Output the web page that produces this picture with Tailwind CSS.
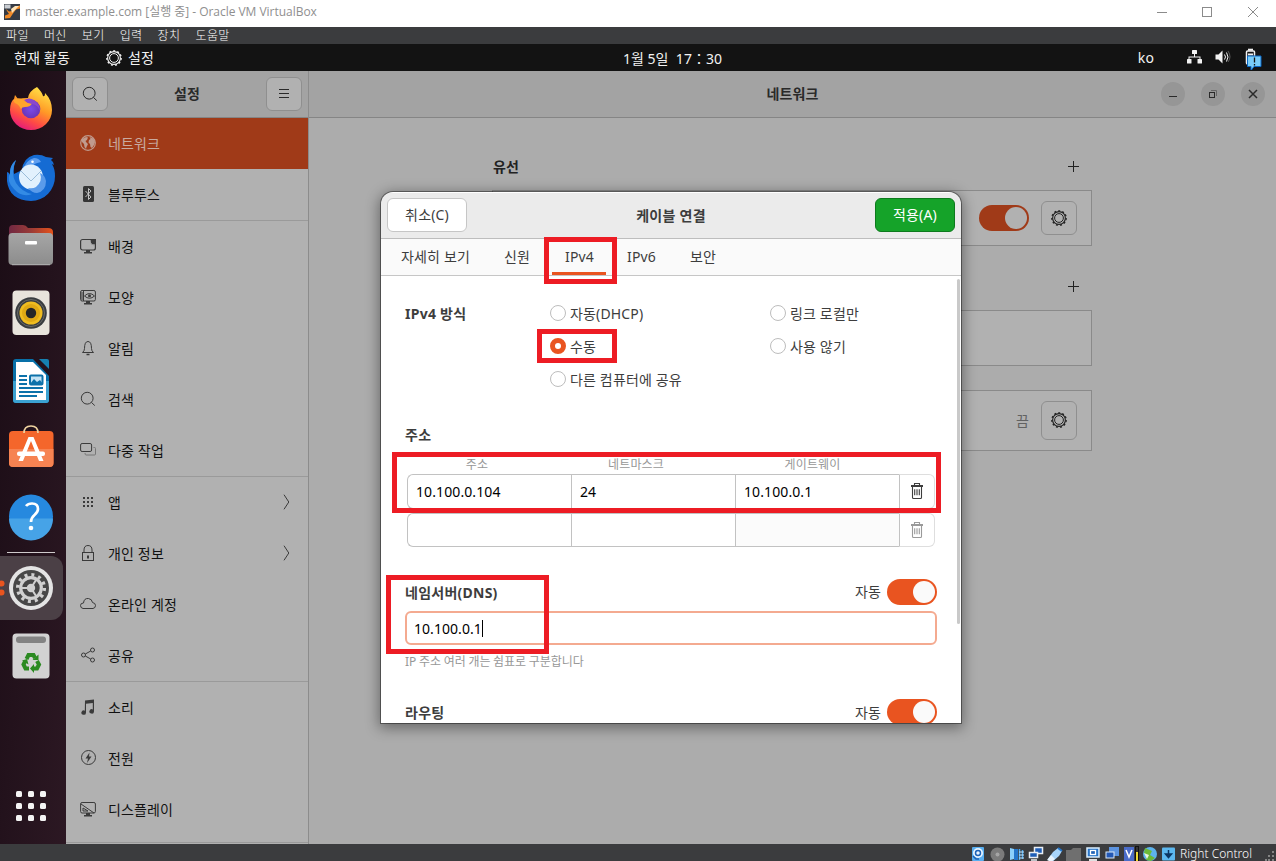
<!DOCTYPE html>
<html lang="ko">
<head>
<meta charset="utf-8">
<title>master.example.com</title>
<script src="https://cdn.jsdelivr.net/npm/@tailwindcss/browser@4"></script>
</head>
<body class="w-[1276px] h-[861px] overflow-hidden relative flex flex-col bg-white font-['Noto_Sans','Noto_Sans_CJK_KR',sans-serif] text-[14px] leading-5 tracking-[0.15px] text-[#3d3d3d]">

<svg width="0" height="0" class="absolute">
  <defs>
    <symbol id="gear" viewBox="0 0 16 16"><g fill="none" stroke="currentColor"><circle cx="8" cy="8" r="6.400" stroke-width="1.100"/><circle cx="8" cy="8" r="4.400"/><circle cx="8" cy="8" r="7.200" stroke-width="1.300" stroke-dasharray="2 2.112"/></g></symbol>
    <symbol id="search" viewBox="0 0 16 16"><g fill="none" stroke="currentColor"><circle cx="7.200" cy="7.200" r="5.900"/><path d="M11.400 11.400l3.400 3.200"/></g></symbol>
    <symbol id="trash" viewBox="0 0 16 18"><g fill="none" stroke="currentColor" stroke-width="1.100"><path d="M5.500 3V1.500h5V3M3.500 5v10.500q0 1 1 1h7q1 0 1-1V5"/><path d="M2 4h12" stroke-width="2"/><path d="M5.700 7.200v6M8 7.200v6M10.300 7.200v6"/></g></symbol>
    <symbol id="chev" viewBox="0 0 8 16"><path d="M1 .7l4.800 7.300L1 15.300" fill="none" stroke="currentColor"/></symbol>
  </defs>
</svg>

<!-- host window title bar -->
<header class="h-[27px] shrink-0 bg-white flex items-center pl-1 text-[#8f8f8f]">
  <svg width="16" height="16" class="-mt-1" viewBox="0 0 16 16"><rect width="16" height="16" fill="#353b45"/><rect x=".5" y=".5" width="6" height="4" fill="#c9cdd2"/><path d="M2 5l3 2.500 4-.5 5-5 2-.5v3l-4 1-3 4-3 4.500-5 .5v-3l4-1.500L3 7z" fill="#f08a28"/><path d="M7 5l4-3h4l-4 4-3 3z" fill="#fde3b8"/></svg>
  <span class="ml-[5px] -mt-[3px] text-[12px] tracking-[-0.03px] whitespace-nowrap font-['Open_Sans','Noto_Sans_CJK_KR',sans-serif]">master.example.com [실행 중] - Oracle VM VirtualBox</span>
  <svg class="ml-auto mr-[16px] -mt-[4px]" width="103" height="12" viewBox="0 0 103 12" fill="none" stroke="#8b8b8b"><path d="M0 6.500h10"/><rect x="45.500" y="1.500" width="9" height="9"/><path d="M91 1l10 10M101 1l-10 10"/></svg>
</header>

<nav class="h-[17px] shrink-0 bg-[#3b3c3e] flex items-center pl-[6px] gap-[15px] text-[12px] leading-none tracking-[0.4px] text-white font-['Noto_Sans_CJK_KR',sans-serif] font-light whitespace-nowrap [&>span]:-mt-[2px]">
  <span>파일</span><span>머신</span><span>보기</span><span>입력</span><span>장치</span><span>도움말</span>
</nav>

<!-- guest top panel -->
<div class="h-[27px] shrink-0 bg-[#131313] text-[#f2f2f2] grid grid-cols-3 items-center">
  <div class="flex items-center pl-[14px]"><span>현재 활동</span><svg class="ml-[36px] w-[16px] h-[16px]"><use href="#gear"/></svg><span class="ml-[6px]">설정</span></div>
  <div class="text-center pt-[3px] pr-[6px] whitespace-pre pl-[78px] -ml-[36px] -mr-[33px] tracking-[0.03px]">1월 5일  17：30</div>
  <div class="flex items-center justify-end pr-[11px]">
    <span>ko</span>
    <svg class="ml-[31px]" width="80" height="24" viewBox="0 0 80 24">
      <g fill="#f2f2f2"><rect x="7" y="4" width="5" height="4" rx=".6"/><rect x="2" y="13" width="4.500" height="4.500" rx=".6"/><rect x="12.500" y="13" width="4.500" height="4.500" rx=".6"/><path d="M9 8h1v2.500h5.500V13h-1v-1.500h-10V13h-1v-2.500H9zM30.500 8.500h3l4-4v13l-4-4h-3z"/></g>
      <g fill="none" stroke="#f2f2f2"><path d="M39.500 8.500q2 2.500 0 5M41.500 6.500q3 4.500 0 9" /><path d="M43 5q4 6 0 11" stroke="#777" stroke-width=".7"/><rect x="61.500" y="5" width="8" height="13" rx="1" stroke-width="1.500"/><path d="M63 3.700h5" stroke-width="2"/></g>
      <path d="M63 7.500h5v2h-5z" fill="#eee"/><path d="M62.500 10h13.500v10.500h-7l-3 4v-4h-3.500z" fill="#79cdf9" stroke="#0a67c4"/><path d="M69.500 11.500v5M69.500 18v1.500" stroke="#111" stroke-width="1.300"/>
    </svg>
  </div>
</div>

<main class="h-[773px] shrink-0 flex">
  <!-- dock -->
  <aside class="w-[66px] shrink-0 bg-gradient-to-br from-[#1a0c15] to-[#2c1823] pt-[4px] flex flex-col">
    <svg width="66" height="68" viewBox="0 0 66 68"><defs><linearGradient id="ff" x1=".8" y1="0" x2=".3" y2="1"><stop offset="0" stop-color="#ffe94a"/><stop offset=".45" stop-color="#ff9a26"/><stop offset=".75" stop-color="#ff4a45"/><stop offset="1" stop-color="#e3197e"/></linearGradient><radialGradient id="fp"><stop offset="0" stop-color="#7a4be8"/><stop offset="1" stop-color="#6b35b8"/></radialGradient></defs>
      <path d="M37 12q5 5 6 9 2 1 2-3 7 7 7 17a21 20 0 0 1-42 0Q10 27 14 24l1-4 3 4q4-1 10-1 1-7 9-11z" fill="url(#ff)"/><circle cx="31" cy="34" r="9.300" fill="url(#fp)"/><path d="M13 25q7-4 11 1 3 2 8 2-1 4-7 4-3 0-4 2-2-4-4-5-3-1-4-4z" fill="#ffa52b"/><path d="M24 25q5-3 10 0 6 4 6 11-2-6-8-7l-4-1z" fill="#8a48cc"/></svg>
    <svg width="66" height="68" viewBox="0 0 66 68"><path d="M16 17q-3 7-2 14l8-4q1-12 12-15 7-1 12 2l7 1-2 2q3 2 3 5l-2-1q3 5 3 12a24 24.500 0 0 1-24 25Q9 57 7 38L7 29q2 0 3 3-1-9 6-15z" fill="#156bd3"/><path d="M16 17q-6 13 0 23 6 9 16 11-10 4-18-5-8-8-4-16 0-8 6-13z" fill="#338be5"/><path d="M23 27q3-10 11-12 5 0 7 4-6 1-9 4z" fill="#5f9ff0"/><ellipse cx="31" cy="34" rx="12" ry="12.500" fill="#e2f1fd"/><path d="M21 28l10 10 10-10" fill="none" stroke="#9bbdd9"/><path d="M40 30q3 8-4 14-3 2-8 1 4 5 9 5 9-2 9-12-1-6-6-8z" fill="#5a9bea"/><circle cx="32.500" cy="18.700" r="1.300" fill="#fff"/></svg>
    <svg width="66" height="68" viewBox="0 0 66 68"><defs><linearGradient id="fo"><stop offset="0" stop-color="#702842"/><stop offset=".5" stop-color="#9a3b37"/><stop offset="1" stop-color="#e6521b"/></linearGradient><linearGradient id="gr" x2="0" y2="1"><stop offset="0" stop-color="#a6a6a6"/><stop offset="1" stop-color="#8c8c8c"/></linearGradient></defs><path d="M9 18q0-4 4-4h10q3 0 5 3h20q5 0 5 4v15H9z" fill="url(#fo)"/><rect x="8.500" y="22" width="44.500" height="32" rx="4" fill="url(#gr)"/><path d="M12 53.800h38" stroke="#c8c8c8" stroke-width=".7"/><rect x="25" y="30" width="12" height="3.500" rx="1" fill="#fff"/></svg>
    <svg width="66" height="68" viewBox="0 0 66 68"><rect x="12.500" y="11.500" width="37" height="44.500" rx="4" fill="#e8e4dc"/><circle cx="31" cy="34" r="15.800" fill="#393d40"/><circle cx="31" cy="34" r="13.500" fill="none" stroke="#696a68"/><circle cx="31" cy="34" r="11.500" fill="#f0bd20"/><circle cx="31" cy="34" r="9" fill="#e0a914"/><circle cx="31" cy="34" r="5.200" fill="#252627"/></svg>
    <svg width="66" height="68" viewBox="0 0 66 68"><path d="M13 15q0-3 3-3h17l16 17v24q0 3-3 3H16q-3 0-3-3z" fill="#0870a8"/><path d="M13 34h36v19q0 3-3 3H16q-3 0-3-3z" fill="#3ba2d2"/><path d="M16 15h17l13 13v25H16z" fill="#fff"/><path d="M39 12h8q2 0 2 2v8z" fill="#1680b0"/><g stroke="#0d72aa" stroke-width="2"><path d="M19 29h8M19 33h8M19 37h8M19 41h24M19 45h24M19 49h18"/><rect x="30" y="28.500" width="12.500" height="9" rx="1" fill="#c4e3f4"/></g><path d="M30 37l4-5 3 3 3-2 3 4z" fill="#0d72aa"/></svg>
    <svg width="66" height="68" viewBox="0 0 66 68"><rect x="9" y="16" width="44.500" height="36" rx="4" fill="#f4662b"/><path d="M9 34h44.500v14q0 4-4 4H13q-4 0-4-4z" fill="#f68352"/><path d="M24 18q0-7 7-7t7 7" fill="none" stroke="#efd3a0" stroke-width="1.700"/><path d="M28.500 22h5l10 24H39l-8-20-8 20h-4.500z" fill="#fff"/><rect x="17" y="36.500" width="28" height="4.500" rx="2" fill="#fff"/></svg>
    <svg width="66" height="68" viewBox="0 0 66 68"><circle cx="31" cy="33.500" r="22" fill="#2689df"/><path d="M9 35.500h44a22 22 0 0 1-44 0z" fill="#46a3e7"/><path d="M26 23q2-2.500 6-2.500 6 0 6 5.500 0 3-3.500 6T31 39" fill="none" stroke="#fff" stroke-width="2.700"/><circle cx="31" cy="45" r="2.300" fill="#fff"/></svg>
    <div class="h-[2px] ml-[7px] w-[48px] border-b border-[#cfcacc]"></div>
    <svg class="mt-[1px]" width="66" height="68" viewBox="0 0 66 68"><rect x="-12" y="2" width="75" height="64" rx="12" fill="#4b4046"/><circle cx="1.500" cy="29.500" r="3" fill="#e9541f"/><circle cx="1.500" cy="38.500" r="3" fill="#e9541f"/><circle cx="31" cy="34" r="22" fill="#e4e4e4"/><circle cx="31" cy="34" r="18" fill="#474747"/><g fill="none" stroke="#d0d0d0"><circle cx="31" cy="34" r="10.300" stroke-width="3.200"/><circle cx="31" cy="34" r="13.300" stroke-width="3.500" stroke-dasharray="3 3.960"/><path d="M22 34h9M31 34l5-8M31 34l5 8" stroke-width="2"/></g><circle cx="31" cy="34" r="4.200" fill="#d0d0d0"/></svg>
    <svg width="66" height="68" viewBox="0 0 66 68"><rect x="12.500" y="11.500" width="37" height="45" rx="4" fill="#d2d2d2"/><rect x="16" y="14.500" width="30" height="6.500" rx="3" fill="#838383"/><g fill="none" stroke="#2b8a21" stroke-width="4"><path d="M26.500 37l2-4h5l1.500 3M37 39l2 3.500-2 4h-4M29 46.500h-3.500l-2-4 1.500-3"/></g><g fill="#2b8a21"><path d="M38.500 32.500v5.500h-6zM34 42v9l-4-4.500zM22 38.500l5-1.500 1.500 5.500z"/></g></svg>
    <svg class="mt-[77px]" width="66" height="68" viewBox="0 0 66 68"><g fill="#f4f4f4"><rect x="16" y="24" width="6" height="6" rx="1.500"/><rect x="28" y="24" width="6" height="6" rx="1.500"/><rect x="40" y="24" width="6" height="6" rx="1.500"/><rect x="16" y="36" width="6" height="6" rx="1.500"/><rect x="28" y="36" width="6" height="6" rx="1.500"/><rect x="40" y="36" width="6" height="6" rx="1.500"/><rect x="16" y="48" width="6" height="6" rx="1.500"/><rect x="28" y="48" width="6" height="6" rx="1.500"/><rect x="40" y="48" width="6" height="6" rx="1.500"/></g></svg>
  </aside>

  <!-- settings sidebar -->
  <section class="w-[243px] shrink-0 bg-[#b1b1b1] border-r border-[#8c8c8c] text-[#111] overflow-hidden">
    <div class="h-[47px] bg-[#a3a3a3] border-b border-[#858585] flex items-center justify-between px-[6px] text-[#2a2a2a]">
      <div class="w-9 h-[34px] rounded-md border border-[#8f8f8f] bg-[#b1b1b1] flex items-center justify-center"><svg class="w-4 h-4"><use href="#search"/></svg></div>
      <b>설정</b>
      <div class="w-9 h-[34px] rounded-md border border-[#8f8f8f] bg-[#b1b1b1] flex items-center justify-center"><svg width="16" height="16" viewBox="0 0 16 16" stroke="currentColor"><path d="M3 3.500h10M3 7.500h10M3 11.500h10"/></svg></div>
    </div>
    <ul class="[&>li]:h-[51px] [&>li]:flex [&>li]:items-center [&>li]:pl-[14px] [&>li]:gap-3 [&_svg]:shrink-0 [&_svg]:-mt-[2px] [&_svg]:text-[#3a3a3a]">
      <li class="bg-[#a03a18] text-[#c9aaa0]"><svg width="16" height="16" viewBox="0 0 16 16"><circle cx="8" cy="8" r="7.300" fill="none" stroke="#c09b8e" stroke-width="1.200"/><path d="M2 4l4-2 2 .5L7 5 5.500 6l1 1.500L8 9 6.500 12 6 14 4.500 12 4 9 2 7zM9.500 2l4 1.500L15 7l-1 3-2 3-1.500-1-.5-3-1.500-1.500L9 5l1.500-1z" fill="#c09b8e"/></svg><span>네트워크</span></li>
      <li><svg width="16" height="16" viewBox="0 0 16 16"><rect x="3" width="11" height="16" rx="1.500" fill="#353535"/><path d="M5.500 5l5.500 6-2.500 2.500v-11L11 5l-5.500 6" fill="none" stroke="#c0c0c0"/></svg><span>블루투스</span></li>
      <li class="border-t border-[#9a9a9a] !h-[52px]"><svg width="16" height="16" viewBox="0 0 16 16"><rect x=".6" y="1.500" width="14.800" height="10.500" rx="2" fill="none" stroke="currentColor" stroke-width="1.200"/><path d="M10 1h6v6q-2 1-5-1zM6 12h4v2h2v1.500H4V14h2z" fill="currentColor"/><path d="M10 2q-.5 5 5 5" stroke="#b1b1b1" fill="none"/></svg><span>배경</span></li>
      <li><svg width="16" height="16" viewBox="0 0 16 16"><g fill="none" stroke="currentColor"><rect x=".6" y="1.500" width="14.800" height="10.500" rx="1.500"/><path d="M3.500 2v10M1 4h2M1 6h2M1 8h2M1 10h2M4.500 7q5-5 10 0-5 4.500-10 0z"/></g><circle cx="9.500" cy="6.700" r="1.500" fill="currentColor"/><path d="M6 12h4v2h2v1.500H4V14h2z" fill="currentColor"/></svg><span>모양</span></li>
      <li><svg width="16" height="16" viewBox="0 0 16 16" fill="none" stroke="currentColor"><path d="M2.500 12.500q2-1.500 2-4 0-7 3.500-7t3.500 7q0 2.500 2 4z"/><path d="M6.500 14.500h3" stroke-width="1.500"/></svg><span>알림</span></li>
      <li><svg class="w-4 h-4"><use href="#search"/></svg><span>검색</span></li>
      <li><svg width="16" height="16" viewBox="0 0 16 16" fill="none" stroke="currentColor"><rect x=".6" y="1.500" width="11" height="8" rx="1.500"/><path d="M13.500 5.500h1q1 0 1 1v5.500q0 1-1 1H6q-1 0-1-2" stroke="#777"/></svg><span>다중 작업</span></li>
      <li class="border-t border-[#9a9a9a] !h-[52px]"><svg width="16" height="16" viewBox="0 0 16 16" fill="currentColor"><path d="M3 3h2v2H3zM7 3h2v2H7zM11 3h2v2h-2zM3 7h2v2H3zM7 7h2v2H7zM11 7h2v2h-2zM3 11h2v2H3zM7 11h2v2H7zM11 11h2v2h-2z"/></svg><span>앱</span><svg class="ml-auto mr-[17px] w-2 h-4"><use href="#chev"/></svg></li>
      <li><svg width="16" height="16" viewBox="0 0 16 16" fill="none" stroke="currentColor"><rect x="2.500" y="7.500" width="11" height="8"/><path d="M4 7.500V5q0-4.500 4-4.500T12 5v2.500"/><path d="M8 10.500v3" stroke-width="2"/></svg><span>개인 정보</span><svg class="ml-auto mr-[17px] w-2 h-4"><use href="#chev"/></svg></li>
      <li><svg width="16" height="16" viewBox="0 0 16 16" fill="none" stroke="currentColor"><path d="M3 12.500q-2.500-.5-2.500-3T3.500 7q.5-5 5-4.500 3.500.5 4 4 3 .5 3 3t-2.500 3z"/></svg><span>온라인 계정</span></li>
      <li><svg width="16" height="16" viewBox="0 0 16 16" fill="none" stroke="currentColor"><circle cx="3.500" cy="8" r="2"/><circle cx="12.500" cy="3" r="2"/><circle cx="12.500" cy="13" r="2"/><path d="M5.300 7l5.400-3M5.300 9l5.400 3"/></svg><span>공유</span></li>
      <li class="border-t border-[#9a9a9a] !h-[52px]"><svg width="16" height="16" viewBox="0 0 16 16"><path d="M5 1.500L14 .5v12a2.300 2.200 0 1 1-1.200-2V4L6 4.700v9a2.300 2.200 0 1 1-1.200-2z" fill="currentColor"/></svg><span>소리</span></li>
      <li><svg width="16" height="16" viewBox="0 0 16 16"><circle cx="8.500" cy="7.500" r="7" fill="none" stroke="currentColor"/><path d="M9.500 2.500L5.500 8.500H8l-1 4.500 4.500-6.500H9z" fill="currentColor"/></svg><span>전원</span></li>
      <li><svg width="16" height="16" viewBox="0 0 16 16" fill="none" stroke="currentColor"><rect x=".6" y="1.500" width="14.800" height="10.500" rx="1.500"/><path d="M1 3l13 9M3 7v3h5z"/><path d="M6 12h4v2h2v1.500H4V14h2z" fill="currentColor" stroke="none"/></svg><span>디스플레이</span></li>
      <li class="!h-2 border-b border-[#9a9a9a]"></li>
    </ul>
  </section>

  <!-- network panel -->
  <section class="flex-1 bg-[#acacac] text-[#222] flex flex-col">
    <div class="h-[47px] shrink-0 bg-[#a3a3a3] border-b border-[#858585] grid grid-cols-3 items-center text-[#2a2a2a]">
      <div></div><b class="text-center">네트워크</b>
      <div class="flex justify-end gap-4 pr-[11px] [&>i]:w-6 [&>i]:h-6 [&>i]:rounded-full [&>i]:bg-[#969696]">
        <i><svg viewBox="0 0 24 24" stroke="currentColor"><path d="M8 14.500h8"/></svg></i>
        <i><svg viewBox="0 0 24 24" fill="none" stroke="currentColor"><rect x="8.500" y="10.500" width="5" height="5"/><path d="M10 8.500h5.500V14" stroke="#666"/></svg></i>
        <i><svg viewBox="0 0 24 24" stroke="currentColor" stroke-width="1.500"><path d="M8 8l8 8M16 8l-8 8"/></svg></i>
      </div>
    </div>
    <div class="w-[600px] ml-[183px] pt-[36px] flex flex-col">
      <div class="h-[36px] flex justify-between items-start pl-[1px] pr-[12px]"><b class="mt-[3px]">유선</b><svg class="mt-[6px]" width="13" height="13" viewBox="0 0 13 13" stroke="currentColor"><path d="M1 6.500h11M6.500 1v11"/></svg></div>
      <div class="h-[56px] bg-[#b1b1b1] border border-[#8a8a8a] flex items-center justify-end pr-[14px] gap-3">
        <div class="w-[50px] h-[26px] rounded-full bg-[#a03a18] p-[2px] flex justify-end"><div class="w-[22px] h-[22px] rounded-full bg-[#b1b1b1]"></div></div>
        <div class="w-9 h-[34px] rounded-md border border-[#8f8f8f] flex items-center justify-center"><svg class="w-4 h-4"><use href="#gear"/></svg></div>
      </div>
      <div class="h-[64px] flex justify-end items-start pr-[12px]"><svg class="mt-[34px]" width="13" height="13" viewBox="0 0 13 13" stroke="currentColor"><path d="M1 6.500h11M6.500 1v11"/></svg></div>
      <div class="h-[56px] bg-[#b1b1b1] border border-[#8a8a8a]"></div>
      <div class="mt-[24px] h-[61px] bg-[#b1b1b1] border border-[#8a8a8a] flex items-center justify-end pr-[14px] gap-3">
        <span class="text-[#626262]">끔</span>
        <div class="w-9 h-[39px] rounded-md border border-[#8f8f8f] flex items-center justify-center"><svg class="w-4 h-4 -mt-px"><use href="#gear"/></svg></div>
      </div>
    </div>
  </section>
</main>

<!-- host status bar -->
<footer class="h-[17px] shrink-0 bg-[#3b3c3e] flex items-center justify-end">
  <svg width="208" height="17" viewBox="0 0 208 17">
    <rect x="4" y="3" width="12" height="14" rx="1" fill="#58aef0"/><circle cx="10" cy="9" r="5" fill="#e8f4ff"/><circle cx="10" cy="9" r="2.500" fill="none" stroke="#1c62b8" stroke-width="1.500"/><path d="M5 12l3 3h3" stroke="#1c62b8" stroke-width="1.500" fill="none"/>
    <circle cx="29.500" cy="10.500" r="7" fill="#7b7b7b"/><circle cx="29.500" cy="10.500" r="2" fill="#a5a5a5"/>
    <path d="M42 4l4 1v10l-4 1z" fill="#8cd0fb"/><path d="M46 5h4v11h-4z" fill="#2576ca"/><path d="M51.500 5v11M54.500 6v9" stroke="#4dabf0" stroke-width="1.500"/><path d="M51 8h5M51 11h5M51 14h5" stroke="#bfe3ff"/>
    <rect x="66.500" y="3.500" width="8" height="6" fill="#1e5eb7" stroke="#e8eef5" stroke-width="1.500"/><rect x="61.500" y="8.500" width="8" height="5" fill="#1e5eb7" stroke="#e8eef5" stroke-width="1.500"/><path d="M63 16h6" stroke="#e8eef5" stroke-width="1.500"/>
    <path d="M80 15l5-7 5-4 4 3-3 5-7 6z" fill="#a8d5fb"/><path d="M83 11l4 4-4 3-4-2z" fill="#e9f5ff"/><path d="M90 4l4 3" stroke="#2576ca" stroke-width="2"/>
    <path d="M98 6h5l2-2h8v14H98z" fill="#6f6f6f"/>
    <rect x="119" y="4" width="12" height="9" fill="#2a76c9" stroke="#dcefff" stroke-width="1.500"/><rect x="122.500" y="6.500" width="5" height="4" fill="#2262b4" stroke="#fff" stroke-width="1.300"/><path d="M121 16h8" stroke="#e0e0e0" stroke-width="2"/>
    <rect x="141" y="3" width="10" height="9" fill="#5b93e0"/><rect x="138" y="8" width="8" height="6" fill="#2358b5" stroke="#dce9f7"/>
    <rect x="156" y="3" width="10" height="14" fill="#4a6cc9"/><path d="M158 6l3 7 3-7" fill="none" stroke="#fff" stroke-width="1.500"/><rect x="167.500" y="2.500" width="3" height="15" fill="#eeda31" stroke="#111"/><path d="M168 3h2v5h-2z" fill="#333"/>
    <circle cx="182" cy="10" r="7" fill="#5db4ee"/><path d="M177 4l7 3-2 4 5 3-4 3-5-1 1-4-3-3z" fill="#6cba38"/><path d="M176 9l5 2-2 4z" fill="#e8f4e0"/>
    <rect x="194" y="3.500" width="13" height="13" rx="1" fill="#5cb8f0"/><path d="M200.500 6v6M197.500 10l3 3.500 3-3.500z" stroke="#0b3663" stroke-width="1.500" fill="#0b3663"/>
  </svg>
  <span class="ml-[4px] mt-[3px] w-[85px] text-[12px] leading-none text-white whitespace-nowrap tracking-[0.02px] font-['Noto_Sans',sans-serif] font-light">Right Control</span>
  <svg width="11" height="17" viewBox="0 0 11 17" fill="#858585"><path d="M7 7h2v2H7zM3 11h2v2H3zM7 11h2v2H7zM0 15h2v2H0zM3 15h2v2H3zM7 15h2v2H7z"/></svg>
</footer>

<!-- connection dialog -->
<div class="absolute left-[381px] top-[192px] w-[580px] h-[531px] bg-white rounded-t-xl overflow-hidden flex flex-col [&_b]:tracking-[0.25px]">
  <div class="h-[47px] shrink-0 bg-[#ebebeb] border-b border-[#bdbdbd] border-t border-t-white flex items-center justify-between px-[6px]">
    <div class="w-20 h-[34px] rounded-md border border-[#c6c6c6] bg-white flex items-center justify-center -mt-px">취소(C)</div>
    <b>케이블 연결</b>
    <div class="w-20 h-[34px] rounded-md border border-[#0d7a1d] bg-[#15a329] text-white flex items-center justify-center -mt-px">적용(A)</div>
  </div>
  <div class="h-[37px] shrink-0 bg-[#fafafa] border-b border-[#c6c6c6] flex pl-[20px] leading-[36px]">
    <span class="w-[103px]">자세히 보기</span><span class="w-[48px]">신원</span>
    <span class="w-[54px] border-b-[3px] border-[#e95420] text-center pl-px">IPv4</span>
    <span class="ml-[21px] w-[63px]">IPv6</span><span>보안</span>
  </div>
  <div class="flex-1 min-h-0 px-[24px]">
    <div class="pt-[21px] grid grid-cols-[145px_220px_1fr] auto-rows-[33px] items-center [&>label]:flex [&>label]:items-center [&>label]:gap-1 [&_i]:w-4 [&_i]:h-4 [&_i]:rounded-full [&_i]:border [&_i]:border-[#bdbdbd] [&_i]:-mt-[2px]">
      <b>IPv4 방식</b><label><i></i>자동(DHCP)</label><label><i></i>링크 로컬만</label>
      <span></span><label><i class="!border-[#e95420] !border-[5.500px]"></i>수동</label><label><i></i>사용 않기</label>
      <span></span><label><i></i>다른 컴퓨터에 공유</label>
    </div>
    <b class="block mt-[29px]">주소</b>
    <div class="mt-[12px] pl-[2px] grid grid-cols-[164px_164px_164px_36px] text-[12px] leading-4 text-[#979797] [&>span]:text-center">
      <span class="pr-[24px]">주소</span><span class="pr-[34px]">네트마스크</span><span class="pr-[9px]">게이트웨이</span>
    </div>
    <div class="mt-[1px] ml-[2px] grid grid-cols-[164px_164px_164px_36px] h-[34px] leading-[33px] text-black [&>div]:border-y [&>div]:border-l [&>div]:border-[#c2c2c2] [&>div]:pl-2 tracking-[0.1px]">
      <div class="rounded-l-md">10.100.0.104</div><div>24</div><div>10.100.0.1</div><div class="!border-[#dedede] !border-l-[#c2c2c2] border-r rounded-r-md !pl-[9px] pt-[7px] text-[#3d3d3d]"><svg class="w-4 h-[18px]"><use href="#trash"/></svg></div>
    </div>
    <div class="mt-[5px] ml-[2px] grid grid-cols-[164px_164px_164px_36px] h-[34px] [&>div]:border-y [&>div]:border-l [&>div]:border-[#c2c2c2]">
      <div class="rounded-l-md"></div><div></div><div class="bg-[#fbfbfb]"></div><div class="!border-[#dedede] !border-l-[#c2c2c2] border-r rounded-r-md pl-[9px] pt-[7px] text-[#9a9a9a]"><svg class="w-4 h-[18px]"><use href="#trash"/></svg></div>
    </div>
    <div class="mt-[32px] h-[26px] flex items-center"><b class="mt-[2px]">네임서버(DNS)</b><span class="ml-auto mr-[6px]">자동</span><div class="w-[50px] h-[26px] rounded-full bg-[#e95420] p-[2px] flex justify-end"><div class="w-[22px] h-[22px] rounded-full bg-[#fafafa]"></div></div></div>
    <div class="mt-[6px] h-[34px] rounded-md border-2 border-[#f4aa90] pl-[7px] flex items-center text-black tracking-[0.05px]"><span class="mt-[1px]">10.100.0.1</span><span class="w-px h-[17px] bg-black"></span></div>
    <div class="mt-[9px] text-[12px] leading-4 text-[#979797] tracking-[-0.03px] [word-spacing:-0.4px]">IP 주소 여러 개는 쉼표로 구분합니다</div>
    <div class="mt-[29px] h-[26px] flex items-center"><b class="mt-px">라우팅</b><span class="ml-auto mr-[6px] mt-px">자동</span><div class="w-[50px] h-[26px] rounded-full bg-[#e95420] p-[2px] flex justify-end"><div class="w-[22px] h-[22px] rounded-full bg-[#fafafa]"></div></div></div>
  </div>
  <div class="absolute right-[1px] top-[87px] w-[3px] h-[345px] rounded-full bg-[#c9c9c9]"></div>
</div>
<div class="absolute left-[381px] top-[192px] w-[580px] h-[531px] rounded-t-xl shadow-[0_0_0_1px_rgba(0,0,0,0.4),0_3px_14px_2px_rgba(0,0,0,0.4)] pointer-events-none"></div>

<!-- highlight frames -->
<div class="absolute left-[544px] top-[237px] w-[73px] h-[47px] border-[5px] border-[#ed1c24]"></div>
<div class="absolute left-[537px] top-[329px] w-[80px] h-[34px] border-[5px] border-[#ed1c24]"></div>
<div class="absolute left-[392px] top-[452px] w-[549px] h-[61px] border-[5px] border-[#ed1c24]"></div>
<div class="absolute left-[386px] top-[575px] w-[163px] h-[79px] border-[5px] border-[#ed1c24]"></div>
</body>
</html>
